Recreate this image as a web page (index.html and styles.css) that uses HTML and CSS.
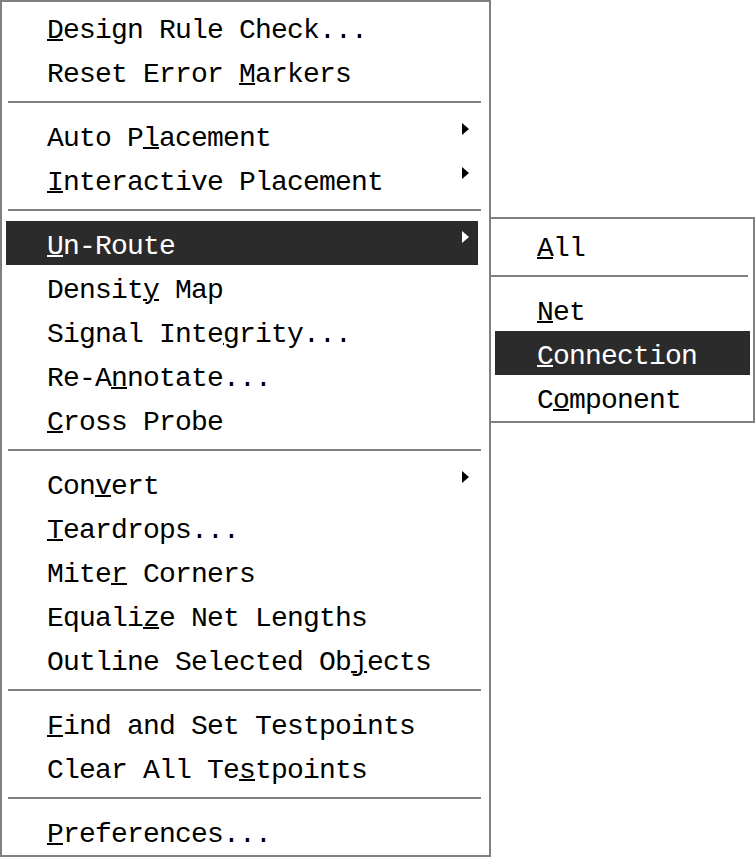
FILE: index.html
```html
<!DOCTYPE html>
<html>
<head>
<meta charset="utf-8">
<link rel="stylesheet" href="styles.css">
</head>
<body>
<div class="stage">
  <div class="menu">
    <div class="item"><span class="label"><u>D</u>esign Rule Check...</span></div>
    <div class="item"><span class="label">Reset Error <u>M</u>arkers</span></div>
    <div class="sep"></div>
    <div class="item"><span class="label">Auto P<u>l</u>acement</span><span class="arrow"></span></div>
    <div class="item"><span class="label"><u>I</u>nteractive Placement</span><span class="arrow"></span></div>
    <div class="sep"></div>
    <div class="item active"><span class="label"><u>U</u>n-Route</span><span class="arrow"></span></div>
    <div class="item"><span class="label">Densit<u>y</u> Map</span></div>
    <div class="item"><span class="label">Signal Inte<u>g</u>rity...</span></div>
    <div class="item"><span class="label">Re-A<u>n</u>notate...</span></div>
    <div class="item"><span class="label"><u>C</u>ross Probe</span></div>
    <div class="sep"></div>
    <div class="item"><span class="label">Con<u>v</u>ert</span><span class="arrow"></span></div>
    <div class="item"><span class="label"><u>T</u>eardrops...</span></div>
    <div class="item"><span class="label">Mite<u>r</u> Corners</span></div>
    <div class="item"><span class="label">Equali<u>z</u>e Net Lengths</span></div>
    <div class="item"><span class="label">Outline Selected Ob<u>j</u>ects</span></div>
    <div class="sep"></div>
    <div class="item"><span class="label"><u>F</u>ind and Set Testpoints</span></div>
    <div class="item"><span class="label">Clear All Te<u>s</u>tpoints</span></div>
    <div class="sep"></div>
    <div class="item"><span class="label"><u>P</u>references...</span></div>
  </div>
  <div class="submenu">
    <div class="item sub"><span class="label"><u>A</u>ll</span></div>
    <div class="sep subsep"></div>
    <div class="item sub"><span class="label"><u>N</u>et</span></div>
    <div class="item sub active"><span class="label"><u>C</u>onnection</span></div>
    <div class="item sub"><span class="label">C<u>o</u>mponent</span></div>
  </div>
</div>
</body>
</html>
```
FILE: styles.css
```css
html, body {
  margin: 0;
  padding: 0;
  background: #ffffff;
}
.stage {
  position: relative;
  width: 756px;
  height: 857px;
  overflow: hidden;
  font-family: "Liberation Mono", "DejaVu Sans Mono", monospace;
  font-size: 28px;
  letter-spacing: -0.8px;
  color: #000000;
}
.menu {
  box-sizing: border-box;
  width: 491px;
  height: 857px;
  border: 2px solid #808080;
  padding: 3px 11px 2px 4px;
  display: flex;
  flex-direction: column;
  background: #ffffff;
}
.item {
  box-sizing: border-box;
  height: 44px;
  padding: 8px 9px 0 41px;
  display: flex;
  flex-shrink: 0;
}
.label {
  line-height: 35px;
  white-space: pre;
}
.label u {
  text-decoration-thickness: 2px;
  text-underline-offset: 1px;
}
.active {
  background: #2b2b2b;
  color: #ffffff;
}
.arrow {
  margin-left: auto;
  margin-top: 2px;
  width: 0;
  height: 0;
  border-left: 7px solid #000000;
  border-top: 6px solid transparent;
  border-bottom: 6px solid transparent;
}
.active .arrow {
  border-left-color: #ffffff;
}
.sep {
  flex-shrink: 0;
  height: 2px;
  margin: 8px -3px 10px 2px;
  background: #808080;
}
.submenu {
  position: absolute;
  left: 489px;
  top: 217px;
  box-sizing: border-box;
  width: 266px;
  height: 206px;
  border: 2px solid #808080;
  padding: 4px 3px 2px 4px;
  display: flex;
  flex-direction: column;
  background: #ffffff;
}
.item.sub {
  padding-left: 42px;
}
.subsep {
  margin: 8px 2px 10px -4px;
}
```
